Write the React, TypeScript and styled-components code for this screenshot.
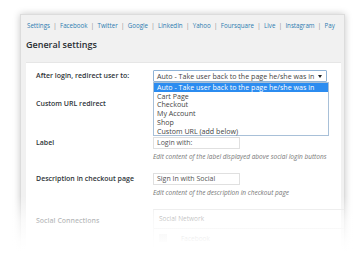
import React from "react";
import styled, { createGlobalStyle } from "styled-components";

const GlobalStyle = createGlobalStyle`
  html, body {
    margin: 0;
    padding: 0;
    background: #ffffff;
  }
  body {
    font-family: "Open Sans", "Liberation Sans", sans-serif;
    color: #32373c;
  }
`;

const navItems = ["Settings", "Facebook", "Twitter", "Google", "LinkedIn", "Yahoo", "Foursquare", "Live", "Instagram", "Pay"];

const redirectOptions = [
  "Auto - Take user back to the page he/she was in",
  "Cart Page",
  "Checkout",
  "My Account",
  "Shop",
  "Custom URL (add below)",
];

export default function App() {
  return (
    <>
      <GlobalStyle />
      <Page>
        <Frame>
          <Nav>
            {navItems.map((item, i) => (
              <React.Fragment key={item}>
                {i > 0 && <Sep>|</Sep>}
                <NavLink>{item}</NavLink>
              </React.Fragment>
            ))}
          </Nav>
          <Title>General settings</Title>
          <Card>
            <Row $top={7}>
              <Label>After login, redirect user to:</Label>
              <Field>
                <Select>
                  <span>{redirectOptions[0]}</span>
                  <Caret />
                </Select>
                <Dropdown>
                  {redirectOptions.map((opt, i) => (
                    <Option key={opt} $active={i === 0}>
                      {opt}
                    </Option>
                  ))}
                </Dropdown>
              </Field>
            </Row>
            <Row $top={16}>
              <Label>Custom URL redirect</Label>
              <Field>
                <Input $width={174} />
              </Field>
            </Row>
            <Row $top={27}>
              <Label>Label</Label>
              <Field>
                <Input $width={87}>Login with:</Input>
                <Help>Edit content of the label displayed above social login buttons</Help>
              </Field>
            </Row>
            <Row $top={12}>
              <Label>Description in checkout page</Label>
              <Field>
                <Input $width={87}>Sign In with Social</Input>
                <Help>Edit content of the description in checkout page</Help>
              </Field>
            </Row>
            <Row $top={12}>
              <Label $pad={6}>Social Connections</Label>
              <Field>
                <Table>
                  <TableHead>Social Network</TableHead>
                  <TableRow>
                    <Badge />
                    <span>Facebook</span>
                  </TableRow>
                </Table>
              </Field>
            </Row>
          </Card>
        </Frame>
        <Fade />
      </Page>
    </>
  );
}

const Page = styled.div`
  position: relative;
  width: 360px;
  height: 269px;
  overflow: hidden;
  padding: 14px 15px 0 20px;
  box-sizing: border-box;
`;

const Frame = styled.div`
  background: #f1f1f1;
  border: 1px solid #dcdcdc;
  box-shadow: 0 0 7px rgba(0, 0, 0, 0.22);
  padding: 0 3px 20px 5px;
  height: 250px;
  box-sizing: border-box;
`;

const Nav = styled.div`
  display: flex;
  align-items: center;
  height: 21px;
  padding: 0 0 0 1px;
  font-size: 6.2px;
  white-space: nowrap;
`;

const NavLink = styled.span`
  color: #2b7bb0;
`;

const Sep = styled.span`
  color: #8a8a8a;
  margin: 0 3.3px;
`;

const Title = styled.div`
  font-size: 9px;
  font-weight: 600;
  color: #2a2f34;
  height: 26px;
  line-height: 18px;
`;

const Card = styled.div`
  background: #ffffff;
  border-top: 1px solid #e6e6e6;
  padding: 0 0 20px 10px;
`;

const Row = styled.div<{ $top: number }>`
  display: grid;
  grid-template-columns: 117px 1fr;
  margin-top: ${(p) => p.$top}px;
`;

const Label = styled.div<{ $pad?: number }>`
  font-size: 7px;
  font-weight: 600;
  color: #2f3439;
  line-height: 12px;
  padding-top: ${(p) => p.$pad ?? 0}px;
`;

const Field = styled.div`
  position: relative;
`;

const Select = styled.div`
  width: 174px;
  height: 12px;
  box-sizing: border-box;
  border: 1px solid #8fb3d6;
  border-radius: 1px;
  display: flex;
  align-items: center;
  justify-content: space-between;
  padding: 0 4px 0 3px;
  font-size: 7.1px;
  color: #444;
  background: #fff;
  white-space: nowrap;
`;

const Caret = styled.span`
  width: 0;
  height: 0;
  border-left: 2px solid transparent;
  border-right: 2px solid transparent;
  border-top: 3px solid #222;
`;

const Dropdown = styled.div`
  position: absolute;
  top: 12px;
  left: 0;
  width: 176px;
  box-sizing: border-box;
  border: 1px solid #a8c0d8;
  background: #fff;
  z-index: 2;
`;

const Option = styled.div<{ $active: boolean }>`
  font-size: 7.1px;
  line-height: 8.7px;
  padding: 0 3px;
  white-space: nowrap;
  color: ${(p) => (p.$active ? "#ffffff" : "#444")};
  background: ${(p) => (p.$active ? "#2b8cf0" : "transparent")};
`;

const Input = styled.div<{ $width: number }>`
  width: ${(p) => p.$width}px;
  height: 12px;
  box-sizing: border-box;
  border: 1px solid #e0e0e0;
  font-size: 7px;
  line-height: 10px;
  padding: 0 3px;
  color: #555;
  background: #fff;
  white-space: nowrap;
`;

const Help = styled.div`
  font-size: 6.5px;
  font-style: italic;
  color: #777;
  margin-top: 3px;
  line-height: 9px;
  white-space: nowrap;
`;

const Table = styled.div`
  width: 190px;
  border-top: 1px solid #e4e4e4;
  border-left: 1px solid #ececec;
  font-size: 6.5px;
  color: #666;
`;

const TableHead = styled.div`
  height: 18px;
  line-height: 18px;
  padding-left: 5px;
  border-bottom: 1px solid #e4e4e4;
`;

const TableRow = styled.div`
  display: flex;
  align-items: center;
  gap: 14px;
  height: 18px;
  padding-left: 5px;
`;

const Badge = styled.span`
  width: 8px;
  height: 8px;
  background: #ddd;
`;

const Fade = styled.div`
  position: absolute;
  left: 0;
  right: 0;
  top: 196px;
  bottom: 0;
  background: linear-gradient(
    to bottom,
    rgba(255, 255, 255, 0) 0px,
    rgba(255, 255, 255, 0.65) 24px,
    rgba(255, 255, 255, 0.95) 46px,
    #ffffff 56px
  );
  z-index: 5;
`;
